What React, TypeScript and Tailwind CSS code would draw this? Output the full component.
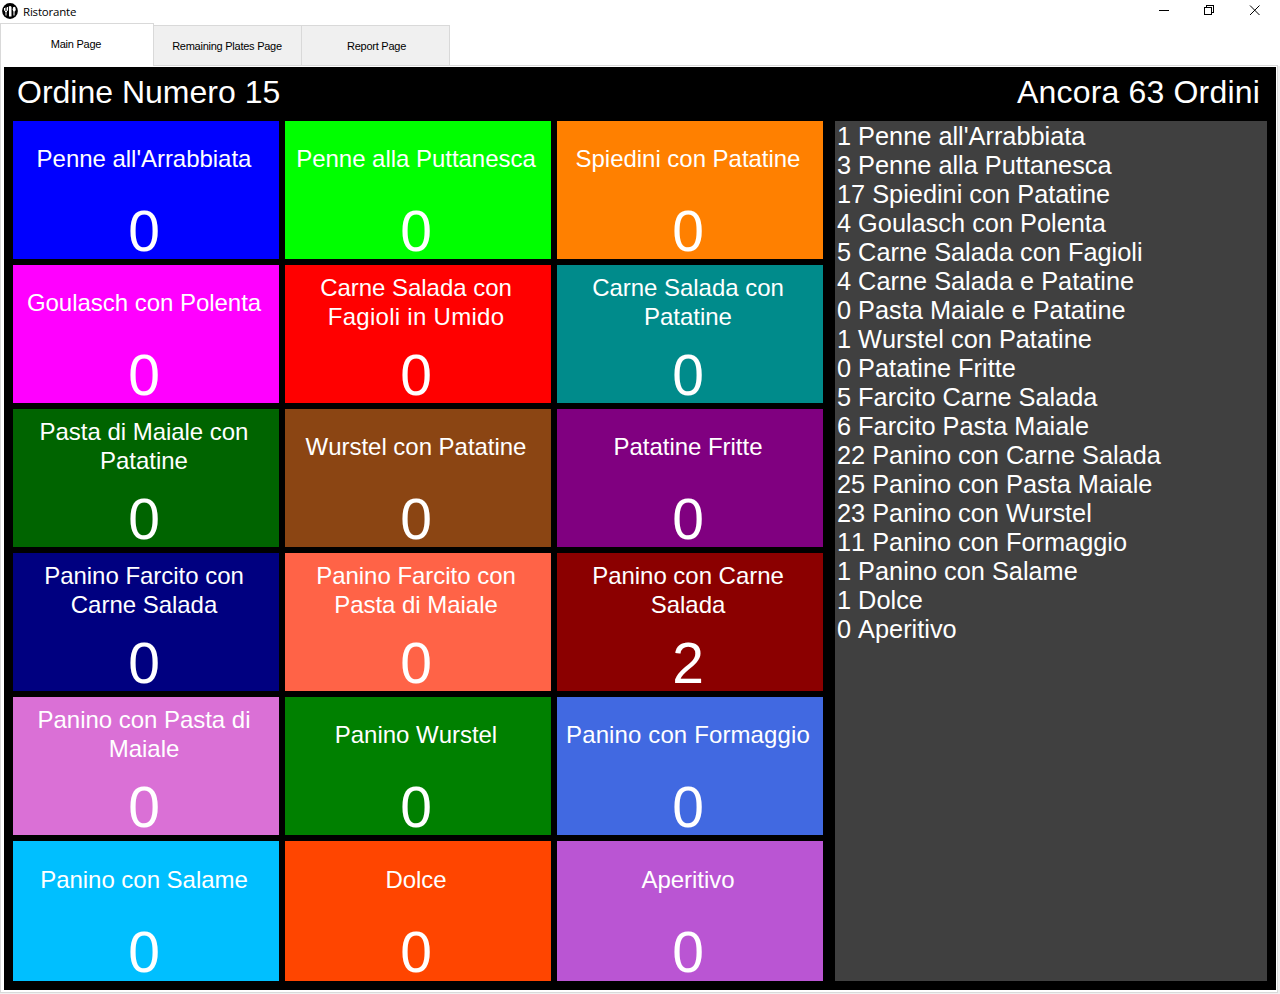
const dishes = [
  { name: ["Penne all'Arrabbiata"], count: 0, color: 'bg-[#0000ff]' },
  { name: ['Penne alla Puttanesca'], count: 0, color: 'bg-[#00ff00]' },
  { name: ['Spiedini con Patatine'], count: 0, color: 'bg-[#ff8000]' },
  { name: ['Goulasch con Polenta'], count: 0, color: 'bg-[#ff00ff]' },
  { name: ['Carne Salada con', 'Fagioli in Umido'], count: 0, color: 'bg-[#ff0000]' },
  { name: ['Carne Salada con', 'Patatine'], count: 0, color: 'bg-[#008b8b]' },
  { name: ['Pasta di Maiale con', 'Patatine'], count: 0, color: 'bg-[#006400]' },
  { name: ['Wurstel con Patatine'], count: 0, color: 'bg-[#8b4513]' },
  { name: ['Patatine Fritte'], count: 0, color: 'bg-[#800080]' },
  { name: ['Panino Farcito con', 'Carne Salada'], count: 0, color: 'bg-[#000080]' },
  { name: ['Panino Farcito con', 'Pasta di Maiale'], count: 0, color: 'bg-[#ff6347]' },
  { name: ['Panino con Carne', 'Salada'], count: 2, color: 'bg-[#8b0000]' },
  { name: ['Panino con Pasta di', 'Maiale'], count: 0, color: 'bg-[#da70d6]' },
  { name: ['Panino Wurstel'], count: 0, color: 'bg-[#008000]' },
  { name: ['Panino con Formaggio'], count: 0, color: 'bg-[#4169e1]' },
  { name: ['Panino con Salame'], count: 0, color: 'bg-[#00bfff]' },
  { name: ['Dolce'], count: 0, color: 'bg-[#ff4500]' },
  { name: ['Aperitivo'], count: 0, color: 'bg-[#ba55d3]' },
];

const letterSpacing: Record<string, string> = {
  'Fagioli in Umido': 'tracking-[0.28px]',
  'Panino con Formaggio': 'tracking-[0.12px]',
};

const remaining = [
  "1 Penne all'Arrabbiata",
  '3 Penne alla Puttanesca',
  '17 Spiedini con Patatine',
  '4 Goulasch con Polenta',
  '5 Carne Salada con Fagioli',
  '4 Carne Salada e Patatine',
  '0 Pasta Maiale e Patatine',
  '1 Wurstel con Patatine',
  '0 Patatine Fritte',
  '5 Farcito Carne Salada',
  '6 Farcito Pasta Maiale',
  '22 Panino con Carne Salada',
  '25 Panino con Pasta Maiale',
  '23 Panino con Wurstel',
  '11 Panino con Formaggio',
  '1 Panino con Salame',
  '1 Dolce',
  '0 Aperitivo',
];

function AppIcon() {
  return (
    <svg width="16" height="16" viewBox="0 0 16 16">
      <circle cx="8" cy="8" r="7.9" fill="#000" />
      <path
        d="M2.500 5v2.500l1.500 1.500v3.500M5.500 4v3.500l-1.500 1.500M4 4.500v4"
        fill="none"
        stroke="#fff"
        strokeWidth="1"
      />
      <path d="M6.800 3.500Q8.500 2.500 9.500 4v9.500H7V9z" fill="#fff" />
      <ellipse cx="12.2" cy="6.2" rx="1.5" ry="2.4" fill="#fff" />
      <path d="M12 7v5.500" stroke="#fff" strokeWidth="1.1" />
    </svg>
  );
}

function TitleBar() {
  return (
    <header className="flex h-[23px] shrink-0 items-start justify-between">
      <div className="flex pl-[2px] pt-[3px]">
        <AppIcon />
        <span className="ml-[5px] font-['Open_Sans',sans-serif] text-[11.5px] leading-[17px] tracking-[-0.2px] text-black">
          Ristorante
        </span>
      </div>
      <svg width="121" height="22" viewBox="0 0 121 22" shapeRendering="crispEdges">
        <path d="M0 10.5h10" stroke="#000" />
        <path d="M45.500 7.500h7v7h-7zM47.500 7.500v-2h7v7h-2" fill="none" stroke="#000" />
        <path
          d="M91 5.500l9.500 9.500M100.500 5.500l-9.500 9.500"
          fill="none"
          stroke="#000"
          shapeRendering="auto"
        />
      </svg>
    </header>
  );
}

function TabStrip() {
  return (
    <nav className="z-10 flex h-[43px] shrink-0 items-end text-[11px] tracking-[-0.25px] text-black">
      <div className="flex h-[43px] w-[154px] items-center justify-center border border-b-0 border-[#d9d9d9] bg-white pb-px pr-[2px]">
        Main Page
      </div>
      <div className="flex h-[41px] w-[148px] items-center justify-center border border-l-0 border-[#d9d9d9] bg-[#f0f0f0] pr-px pt-[2px]">
        Remaining Plates Page
      </div>
      <div className="flex h-[41px] w-[148px] items-center justify-center border border-l-0 border-[#d9d9d9] bg-[#f0f0f0] pl-[2px] pt-[2px]">
        Report Page
      </div>
      <div className="h-px w-[828px] bg-[#d9d9d9]" />
    </nav>
  );
}

export default function App() {
  return (
    <div className="flex h-[994px] w-[1280px] flex-col overflow-hidden bg-white font-['Liberation_Sans',Arial,sans-serif] [font-kerning:none]">
      <TitleBar />
      <TabStrip />
      <div className="flex h-[928px] bg-[#f0f0f0] pb-px pr-[2px]">
        <main className="flex w-[1278px] border-x border-b border-[#d9d9d9] bg-white pb-[2px] pl-[3px] pr-px pt-px">
          <div className="flex h-[923px] w-[1272px] flex-col bg-black px-[9px] text-white">
            <div className="flex h-[54px] shrink-0 justify-between pl-[4px] pr-[7px] pt-[7px] text-[32px] leading-[36px]">
              <h1>Ordine Numero 15</h1>
              <h2 className="tracking-[0.18px]">Ancora 63 Ordini</h2>
            </div>
            <div className="flex gap-[12px]">
              <section className="grid grid-cols-[repeat(3,266px)] grid-rows-[repeat(5,138px)_140px] gap-[6px]">
                {dishes.map((dish, i) => (
                  <button
                    key={dish.name.join(' ')}
                    className={`flex flex-col pr-[4px] text-center ${dish.color} ${i >= 15 ? 'pt-px' : ''}`}
                  >
                    <span className="flex h-[74px] w-full shrink-0 flex-col justify-center text-[24px] leading-[29px]">
                      {dish.name.map((line) => (
                        <span
                          key={line}
                          className={`whitespace-nowrap ${letterSpacing[line] ?? 'tracking-[-0.03px]'}`}
                        >
                          {line}
                        </span>
                      ))}
                    </span>
                    <span className="mt-[6px] h-[58px] w-full pr-px text-[57px] leading-[60px] tracking-[-1px]">
                      {dish.count}
                    </span>
                  </button>
                ))}
              </section>
              <ul className="h-[860px] w-[432px] bg-[#404040] pl-[2px] pt-px text-[25.33px] leading-[29px]">
                {remaining.map((line) => (
                  <li key={line} className="whitespace-nowrap">
                    {line}
                  </li>
                ))}
              </ul>
            </div>
          </div>
        </main>
      </div>
    </div>
  );
}
